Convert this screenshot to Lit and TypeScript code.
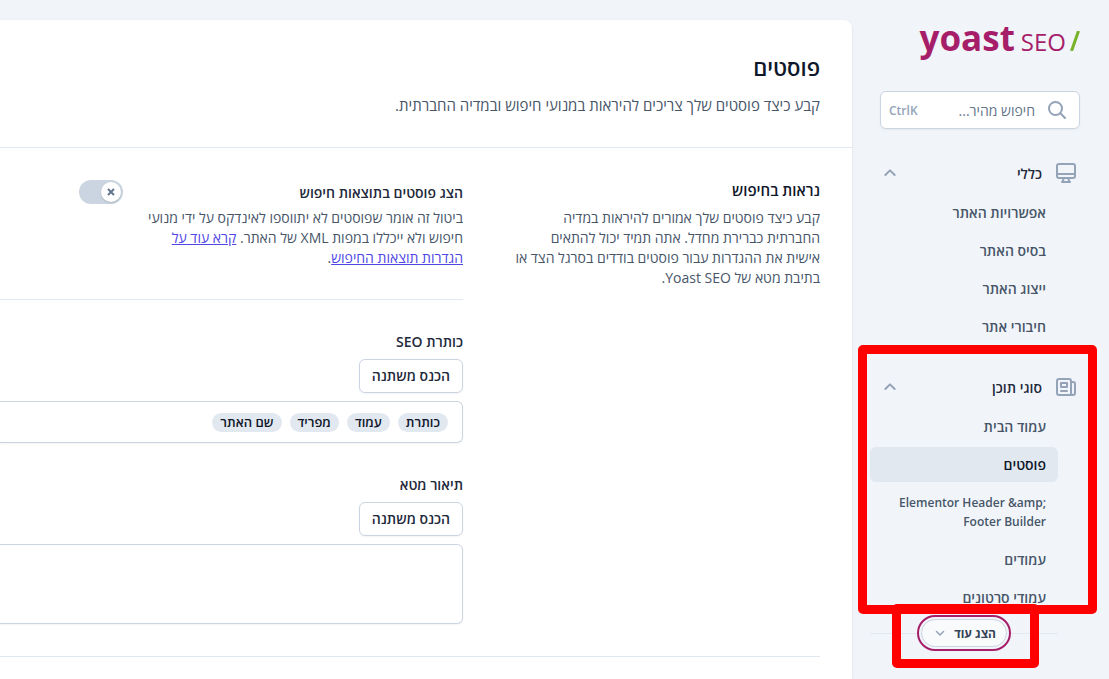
import { LitElement, html, css, svg } from "lit";
import { customElement, property, state } from "lit/decorators.js";

interface MenuItem {
  label: string;
  active?: boolean;
  ltr?: boolean;
}

const desktopIcon = svg`<path d="M9.75 17L9 20l-1 1h8l-1-1-.75-3M3 13h18M5 17h14a2 2 0 002-2V5a2 2 0 00-2-2H5a2 2 0 00-2 2v10a2 2 0 002 2z"/>`;
const newspaperIcon = svg`<path d="M19 20H5a2 2 0 01-2-2V6a2 2 0 012-2h10a2 2 0 012 2v1m2 13a2 2 0 01-2-2V7m2 13a2 2 0 002-2V9a2 2 0 00-2-2h-2m-4-3H9M7 16h6M7 8h6v4H7V8z"/>`;

@customElement("yoast-menu")
class YoastMenu extends LitElement {
  static styles = css`
    :host { display: block; }
    .head {
      display: flex; align-items: center; gap: 12px; width: 100%; height: 40px;
      padding: 0 2px 0 12px; border: 0; background: none; cursor: pointer;
      font: inherit; font-weight: 600; color: #1e293b; text-align: start;
    }
    .title { flex: 1; }
    .icon, .chevron {
      fill: none; stroke: #94a3b8; stroke-linecap: round; stroke-linejoin: round;
    }
    .icon { width: 24px; height: 24px; stroke-width: 2; }
    .chevron { width: 16px; height: 16px; stroke-width: 3; }
    .list {
      list-style: none; margin: 2px 0 0; padding: 0; padding-inline-start: 22px;
      display: flex; flex-direction: column; gap: 3px;
    }
    .link {
      display: block; padding: 8px 12px; border-radius: 6px;
      color: #475569; font-weight: 600; text-decoration: none;
    }
    .active { background: #e2e8f0; color: #0f172a; }
    .ltr { direction: ltr; text-align: right; font-size: 12px; }
  `;
  @property({ attribute: false }) icon: unknown;
  @property() heading = "";
  @property({ attribute: false }) items: MenuItem[] = [];
  @state() open = true;

  render() {
    return html`
      <button class="head" aria-expanded=${this.open} @click=${() => (this.open = !this.open)}>
        <svg class="icon" viewBox="0 0 24 24" aria-hidden="true">${this.icon}</svg>
        <span class="title">${this.heading}</span>
        <svg class="chevron" viewBox="0 0 24 24" aria-hidden="true"><path d=${this.open ? "M5 15l7-7 7 7" : "M19 9l-7 7-7-7"} /></svg>
      </button>
      ${this.open
        ? html`<ul class="list">
            ${this.items.map(
              (i) => html`<li><a href="#" class="link ${i.active ? "active" : ""} ${i.ltr ? "ltr" : ""}">${i.label}</a></li>`
            )}
          </ul>`
        : null}
    `;
  }
}

@customElement("app-root")
class AppRoot extends LitElement {
  static styles = css`
    * { box-sizing: border-box; }
    :host {
      display: block; direction: rtl; background: #f1f5f9; color: #1e293b;
      font: 14px/20px "Open Sans", "Noto Sans", sans-serif;
    }
    .page { display: flex; min-height: 100vh; }
    .sidebar { flex: 0 0 257px; min-width: 0; padding: 16px 29px 11px 18px; line-height: 19px; }
    .logo {
      direction: ltr; display: flex; justify-content: flex-end; align-items: baseline;
      gap: 4px; height: 48px; color: #a61e69; text-decoration: none;
    }
    .brand { font: 700 35px/44px "Open Sans", sans-serif; margin-right: 2px; }
    .product { font: 500 24px/44px "Open Sans", sans-serif; }
    .slash { width: 10px; height: 20px; fill: none; stroke: #77b227; stroke-width: 3; }
    .search {
      display: flex; align-items: center; gap: 12px; height: 38px; margin: 27px 0 24px 10px;
      padding: 0 12px 0 8px; background: #fff; border: 1px solid #cbd5e1; border-radius: 6px;
      box-shadow: 0 1px 2px rgba(0, 0, 0, 0.05);
    }
    .glass { width: 20px; height: 20px; flex: none; fill: none; stroke: #94a3b8; stroke-width: 2; stroke-linecap: round; }
    .query {
      flex: 1; width: 100%; min-width: 0; border: 0; padding: 0; outline: 0; background: none;
      font: inherit; color: #475569;
    }
    .query::placeholder { color: #64748b; opacity: 1; }
    .keys { font-size: 12px; font-weight: 600; color: #94a3b8; direction: ltr; }
    .section { margin-top: 23px; position: relative; }
    .more { display: flex; align-items: center; justify-content: center; height: 36px; margin-inline-start: 22px; position: relative; }
    .rule { flex: 1; height: 1px; background: #e2e8f0; }
    .ring { border: 2px solid #a61e69; border-radius: 18px; padding: 2px; height: 36px; display: flex; background: #f1f5f9; }
    .show-more {
      display: flex; align-items: center; gap: 8px; width: 86px; padding: 0 10px 0 12px;
      border: 1px solid #cbd5e1; border-radius: 14px; background: #f8fafc;
      font: inherit; font-size: 12px; font-weight: 700; color: #334155; cursor: pointer;
      justify-content: space-between; white-space: nowrap;
    }
    .down { width: 12px; height: 12px; fill: none; stroke: #94a3b8; stroke-width: 3; stroke-linecap: round; stroke-linejoin: round; }
    .mark { position: absolute; border: 9px solid #f00; border-radius: 5px; pointer-events: none; }
    .mark-section { inset: -22px -17px 1px -12px; }
    .mark-more { inset: -11px 19px -17px 22px; }

    .main {
      flex: 1; min-width: 0; margin-top: 20px; background: #fff; border-radius: 0 8px 0 0;
      box-shadow: 0 1px 3px rgba(0, 0, 0, 0.1);
    }
    .header { padding: 32px; height: 128px; border-bottom: 1px solid #e2e8f0; color: #475569; font-size: 15px; }
    .h1 { margin: 0 0 13px; font-size: 22px; line-height: 30px; font-weight: 600; color: #0f172a; }
    .body { padding: 32px 32px 0 0; }
    .group { display: flex; gap: 51px; padding-bottom: 32px; border-bottom: 1px solid #e2e8f0; }
    .legend { flex: 0 0 306px; color: #475569; }
    .h2 { margin: 0 0 8px; font-size: 15px; line-height: 20px; font-weight: 600; color: #0f172a; }
    .fields { flex: 1; min-width: 0; }
    .toggle-field { padding-bottom: 31px; border-bottom: 1px solid #e2e8f0; }
    .toggle-row { display: flex; justify-content: space-between; align-items: center; width: 384px; max-width: 100%; height: 24px; margin-bottom: 4px; }
    .label { display: block; font-weight: 600; line-height: 19px; }
    .desc { margin: 0; width: 320px; color: #475569; }
    .inline { color: #4f46e5; text-decoration: underline; }
    .switch { display: grid; direction: ltr; cursor: pointer; }
    .check { appearance: none; grid-area: 1 / 1; margin: 0; width: 44px; height: 24px; border-radius: 12px; background: #cbd5e1; }
    .knob {
      grid-area: 1 / 1; justify-self: end; align-self: center; margin-right: 2px; width: 20px; height: 20px;
      border-radius: 50%; background: #fff; display: grid; place-items: center; pointer-events: none;
      box-shadow: 0 1px 2px rgba(0, 0, 0, 0.15);
    }
    .check:checked + .knob { justify-self: start; margin: 0 0 0 2px; }
    .cross { width: 12px; height: 12px; fill: none; stroke: #64748b; stroke-width: 2; }
    .field { display: flex; flex-direction: column; align-items: flex-start; gap: 8px; margin-top: 32px; }
    .insert {
      height: 34px; padding: 0 12px; border: 1px solid #cbd5e1; border-radius: 6px; background: #fff;
      font: inherit; font-weight: 600; color: #1e293b; box-shadow: 0 1px 2px rgba(0, 0, 0, 0.05); cursor: pointer;
    }
    .box {
      width: 100%; border: 1px solid #cbd5e1; border-inline-end: 0; border-radius: 0 6px 6px 0;
      background: #fff; box-shadow: 0 1px 2px rgba(0, 0, 0, 0.05);
    }
    .chips { display: flex; align-items: center; gap: 8px; height: 42px; padding: 0 14px; }
    .chip { padding: 0 8px; border-radius: 10px; background: #e2e8f0; font-size: 13px; font-weight: 600; line-height: 19px; color: #0f172a; }
    .area { display: block; height: 80px; resize: none; padding: 8px 14px; font: inherit; }
  `;

  private general: MenuItem[] = [
    { label: "אפשרויות האתר" },
    { label: "בסיס האתר" },
    { label: "ייצוג האתר" },
    { label: "חיבורי אתר" },
  ];
  private types: MenuItem[] = [
    { label: "עמוד הבית" },
    { label: "פוסטים", active: true },
    { label: "Elementor Header &amp; Footer Builder", ltr: true },
    { label: "עמודים" },
    { label: "עמודי סרטונים" },
  ];
  private chips = ["כותרת", "עמוד", "מפריד", "שם האתר"];

  render() {
    return html`
      <div class="page">
        <aside class="sidebar">
          <a class="logo" href="#" aria-label="Yoast SEO">
            <span class="brand">yoast</span>
            <span class="product">SEO</span>
            <svg class="slash" viewBox="0 0 10 20" aria-hidden="true"><path d="M8.5 0L1.5 20" /></svg>
          </a>
          <label class="search">
            <svg class="glass" viewBox="0 0 20 20" aria-hidden="true"><circle cx="8.5" cy="8.5" r="6.5" /><path d="M13.3 13.3L18 18" /></svg>
            <input class="query" type="text" placeholder="חיפוש מהיר..." aria-label="חיפוש מהיר" />
            <span class="keys">CtrlK</span>
          </label>
          <nav>
            <yoast-menu .icon=${desktopIcon} heading="כללי" .items=${this.general}></yoast-menu>
            <div class="section">
              <yoast-menu .icon=${newspaperIcon} heading="סוגי תוכן" .items=${this.types}></yoast-menu>
              <div class="mark mark-section"></div>
            </div>
            <div class="more">
              <span class="rule"></span>
              <span class="ring">
                <button class="show-more">
                  הצג עוד
                  <svg class="down" viewBox="0 0 24 24" aria-hidden="true"><path d="M19 9l-7 7-7-7" /></svg>
                </button>
              </span>
              <span class="rule"></span>
              <div class="mark mark-more"></div>
            </div>
          </nav>
        </aside>
        <main class="main">
          <header class="header">
            <h1 class="h1">פוסטים</h1>
            קבע כיצד פוסטים שלך צריכים להיראות במנועי חיפוש ובמדיה החברתית.
          </header>
          <div class="body">
            <section class="group">
              <div class="legend">
                <h2 class="h2">נראות בחיפוש</h2>
                קבע כיצד פוסטים שלך אמורים להיראות במדיה החברתית כברירת מחדל. אתה תמיד יכול להתאים
                אישית את ההגדרות עבור פוסטים בודדים בסרגל הצד או בתיבת מטא של Yoast SEO.
              </div>
              <div class="fields">
                <div class="toggle-field">
                  <div class="toggle-row">
                    <label class="label" for="show">הצג פוסטים בתוצאות חיפוש</label>
                    <span class="switch">
                      <input class="check" id="show" type="checkbox" role="switch" />
                      <span class="knob"><svg class="cross" viewBox="0 0 12 12" aria-hidden="true"><path d="M3 3l6 6M9 3l-6 6" /></svg></span>
                    </span>
                  </div>
                  <p class="desc">
                    ביטול זה אומר שפוסטים לא יתווספו לאינדקס על ידי מנועי חיפוש ולא ייכללו במפות XML של האתר.
                    <a class="inline" href="#">קרא עוד על הגדרות תוצאות החיפוש</a>.
                  </p>
                </div>
                <div class="field">
                  <span class="label" id="title-label">כותרת SEO</span>
                  <button class="insert">הכנס משתנה</button>
                  <div class="box chips" role="textbox" aria-labelledby="title-label">
                    ${this.chips.map((c) => html`<span class="chip">${c}</span>`)}
                  </div>
                </div>
                <div class="field">
                  <label class="label" for="meta">תיאור מטא</label>
                  <button class="insert">הכנס משתנה</button>
                  <textarea class="box area" id="meta"></textarea>
                </div>
              </div>
            </section>
          </div>
        </main>
      </div>
    `;
  }
}
